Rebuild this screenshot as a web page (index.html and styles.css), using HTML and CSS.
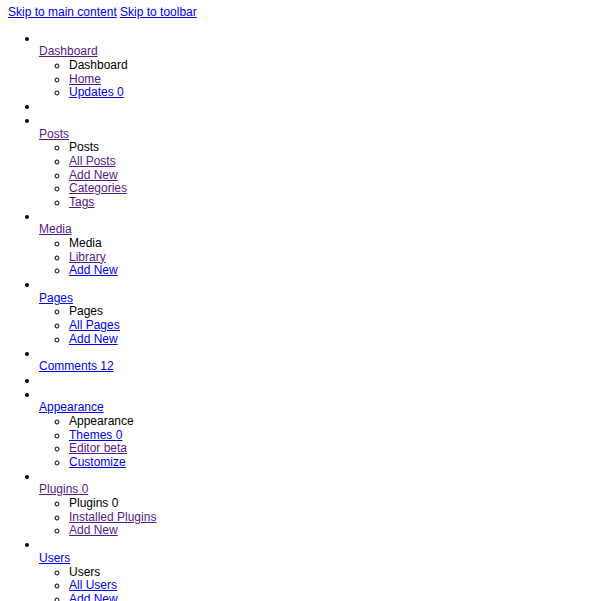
FILE: index.html
```
<!DOCTYPE html>
<html lang="en">
<head>
<meta charset="utf-8">
<title>Dashboard</title>
<link rel="stylesheet" href="styles.css">
</head>
<body>
<div class="shortcuts"><a href="#main">Skip to main content</a> <a href="#toolbar">Skip to toolbar</a></div>
<ul class="menu">
  <li><div class="img"><br></div><a class="v" href="#">Dashboard</a>
    <ul class="sub">
      <li class="head">Dashboard</li>
      <li><a class="v" href="#">Home</a></li>
      <li><a href="#">Updates 0</a></li>
    </ul>
  </li>
  <li><div class="img"><br></div></li>
  <li><div class="img"><br></div><a class="v" href="#">Posts</a>
    <ul class="sub">
      <li class="head">Posts</li>
      <li><a class="v" href="#">All Posts</a></li>
      <li><a class="v" href="#">Add New</a></li>
      <li><a class="v" href="#">Categories</a></li>
      <li><a class="v" href="#">Tags</a></li>
    </ul>
  </li>
  <li><div class="img"><br></div><a class="v" href="#">Media</a>
    <ul class="sub">
      <li class="head">Media</li>
      <li><a class="v" href="#">Library</a></li>
      <li><a href="#">Add New</a></li>
    </ul>
  </li>
  <li><div class="img"><br></div><a href="#">Pages</a>
    <ul class="sub">
      <li class="head">Pages</li>
      <li><a href="#">All Pages</a></li>
      <li><a href="#">Add New</a></li>
    </ul>
  </li>
  <li><div class="img"><br></div><a href="#">Comments 12</a></li>
  <li><div class="img"><br></div></li>
  <li><div class="img"><br></div><a href="#">Appearance</a>
    <ul class="sub">
      <li class="head">Appearance</li>
      <li><a href="#">Themes 0</a></li>
      <li><a class="v" href="#">Editor beta</a></li>
      <li><a href="#">Customize</a></li>
    </ul>
  </li>
  <li><div class="img"><br></div><a class="v" href="#">Plugins 0</a>
    <ul class="sub">
      <li class="head">Plugins 0</li>
      <li><a class="v" href="#">Installed Plugins</a></li>
      <li><a class="v" href="#">Add New</a></li>
    </ul>
  </li>
  <li><div class="img"><br></div><a href="#">Users</a>
    <ul class="sub">
      <li class="head">Users</li>
      <li><a href="#">All Users</a></li>
      <li><a href="#">Add New</a></li>
      <li><a href="#">Profile</a></li>
    </ul>
  </li>
  <li><div class="img"><br></div><a href="#">Tools</a>
    <ul class="sub">
      <li class="head">Tools</li>
      <li><a href="#">Available Tools</a></li>
      <li><a href="#">Import</a></li>
      <li><a href="#">Export</a></li>
    </ul>
  </li>
</ul>
</body>
</html>
```
FILE: styles.css
```
body {
  margin: 6px 8px 8px;
  font-family: "Liberation Sans", Arial, sans-serif;
  font-size: 12px;
  line-height: 13.68px;
  color: #000;
  background: #fff;
}
a {
  color: #0000ee;
  text-decoration: underline;
}
a.v {
  color: #551a8b;
}
.menu {
  list-style: disc;
  margin: 12px 0;
  padding-left: 31px;
}
.sub {
  list-style: circle;
  margin: 0;
  padding-left: 30px;
}
```
